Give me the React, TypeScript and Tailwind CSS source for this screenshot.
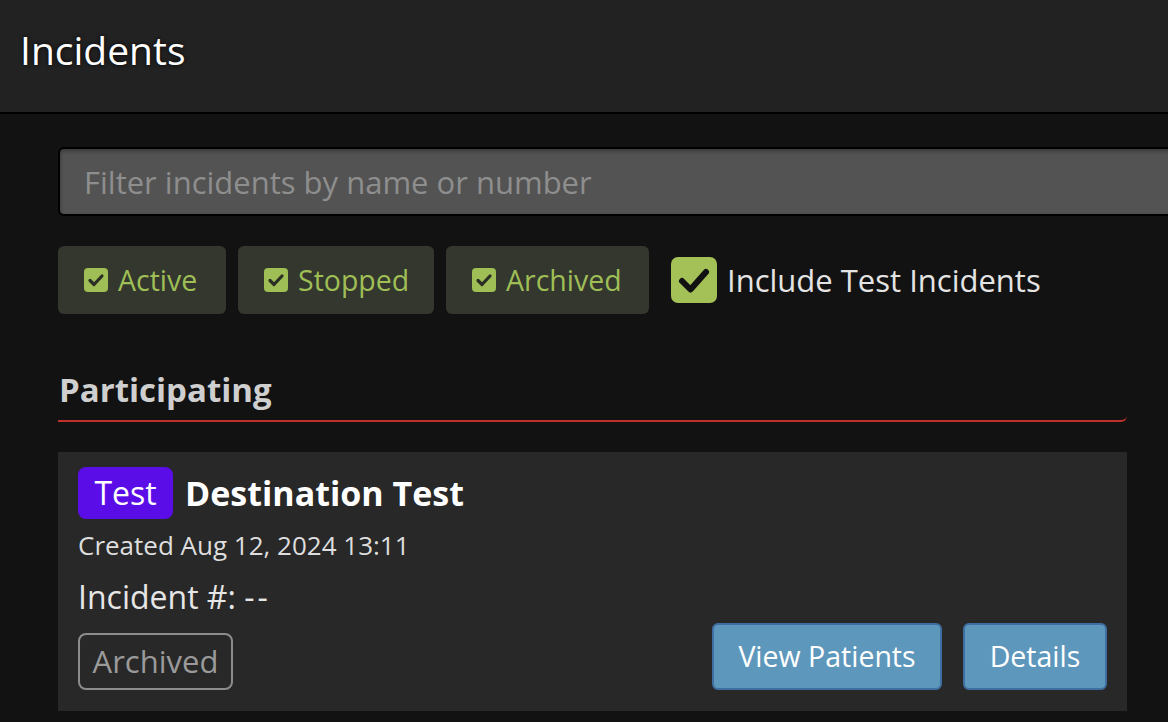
import { useState } from "react";

const font = { fontFamily: '"Open Sans", "Noto Sans", sans-serif' };

const SmallCheck = () => (
  <svg width="24" height="24" viewBox="0 0 24 24">
    <rect x="0" y="0" width="24" height="24" rx="4" fill="#9fbe55" />
    <path d="M6 12.5l4 4 8-8.5" fill="none" stroke="#2b2f26" strokeWidth="3.2" strokeLinecap="round" strokeLinejoin="round" />
  </svg>
);

const BigCheck = () => (
  <svg width="46" height="46" viewBox="0 0 46 46">
    <rect x="0" y="0" width="46" height="46" rx="7" fill="#a3c157" />
    <path d="M11 24l8.5 8.5L35 15" fill="none" stroke="#111" strokeWidth="6" strokeLinecap="round" strokeLinejoin="round" />
  </svg>
);

const FilterChip = ({ label, width }: { label: string; width: string }) => (
  <button className={`flex items-center gap-[10px] h-[68px] pl-[26px] rounded-md bg-[#33372e] text-[#9fbe55] text-[28.5px] ${width}`}>
    <SmallCheck />
    <span>{label}</span>
  </button>
);

const App = () => {
  const [query, setQuery] = useState("");

  return (
    <div className="w-[1168px] h-[722px] overflow-hidden bg-[#121212]" style={font}>
      <header className="h-[114px] bg-[#222222] border-b-2 border-black flex items-center pl-[20px] pb-[12px]">
        <h1 className="text-[39px] leading-[48px] text-white [text-shadow:0_0_4px_rgba(0,0,0,0.9)]">Incidents</h1>
      </header>

      <div className="pl-[58px] pt-[33px]">
        <input
          value={query}
          onChange={(e) => setQuery(e.target.value)}
          placeholder="Filter incidents by name or number"
          className="w-[1140px] h-[69px] rounded-md border-2 border-black bg-[#535353] shadow-[inset_0_2px_4px_rgba(0,0,0,0.35)] px-[24px] text-[31px] text-white placeholder:text-[#8e8e8e] outline-none"
        />

        <div className="flex items-center mt-[30px]">
          <div className="flex gap-[12px]">
            <FilterChip label="Active" width="w-[168px]" />
            <FilterChip label="Stopped" width="w-[196px]" />
            <FilterChip label="Archived" width="w-[203px]" />
          </div>
          <label className="flex items-center gap-[10px] ml-[22px] text-[31px] text-[#e4e4e4]">
            <BigCheck />
            <span>Include Test Incidents</span>
          </label>
        </div>

        <div className="w-[1069px] mt-[56px] border-b-2 border-[#c0302c] rounded-br-md pb-[10px]">
          <h2 className="text-[33px] font-bold text-[#cfcfcf] leading-[40px] pl-[1px]">Participating</h2>
        </div>

        <div className="w-[1069px] mt-[30px] bg-[#282828] px-[20px] pt-[15px] pb-[21px]">
          <div className="flex items-center gap-[12px] h-[52px]">
            <span className="h-[52px] w-[95px] flex items-center justify-center rounded-lg bg-[#5a0de6] text-white text-[32px] leading-none">Test</span>
            <span className="text-[34px] leading-[44px] font-bold text-white">Destination Test</span>
          </div>
          <div className="mt-[11px] text-[26px] leading-[30px] text-[#dedede]">Created Aug 12, 2024 13:11</div>
          <div className="mt-[17px] text-[32px] leading-[40px] text-[#e6e6e6]">Incident #: <span className="tracking-[3px]">--</span></div>
          <div className="flex items-end justify-between mt-[6px]">
            <span className="h-[57px] w-[155px] flex items-center justify-center rounded-lg border-2 border-[#8c8c8c] text-[31px] text-[#9a9a9a]">Archived</span>
            <div className="flex gap-[21px]">
              <button className="h-[67px] w-[230px] rounded-md border-2 border-[#3f6fa0] bg-[#5e97bc] text-white text-[28.5px]">View Patients</button>
              <button className="h-[67px] w-[144px] rounded-md border-2 border-[#3f6fa0] bg-[#5e97bc] text-white text-[28.5px]">Details</button>
            </div>
          </div>
        </div>
      </div>
    </div>
  );
};

export default App;
